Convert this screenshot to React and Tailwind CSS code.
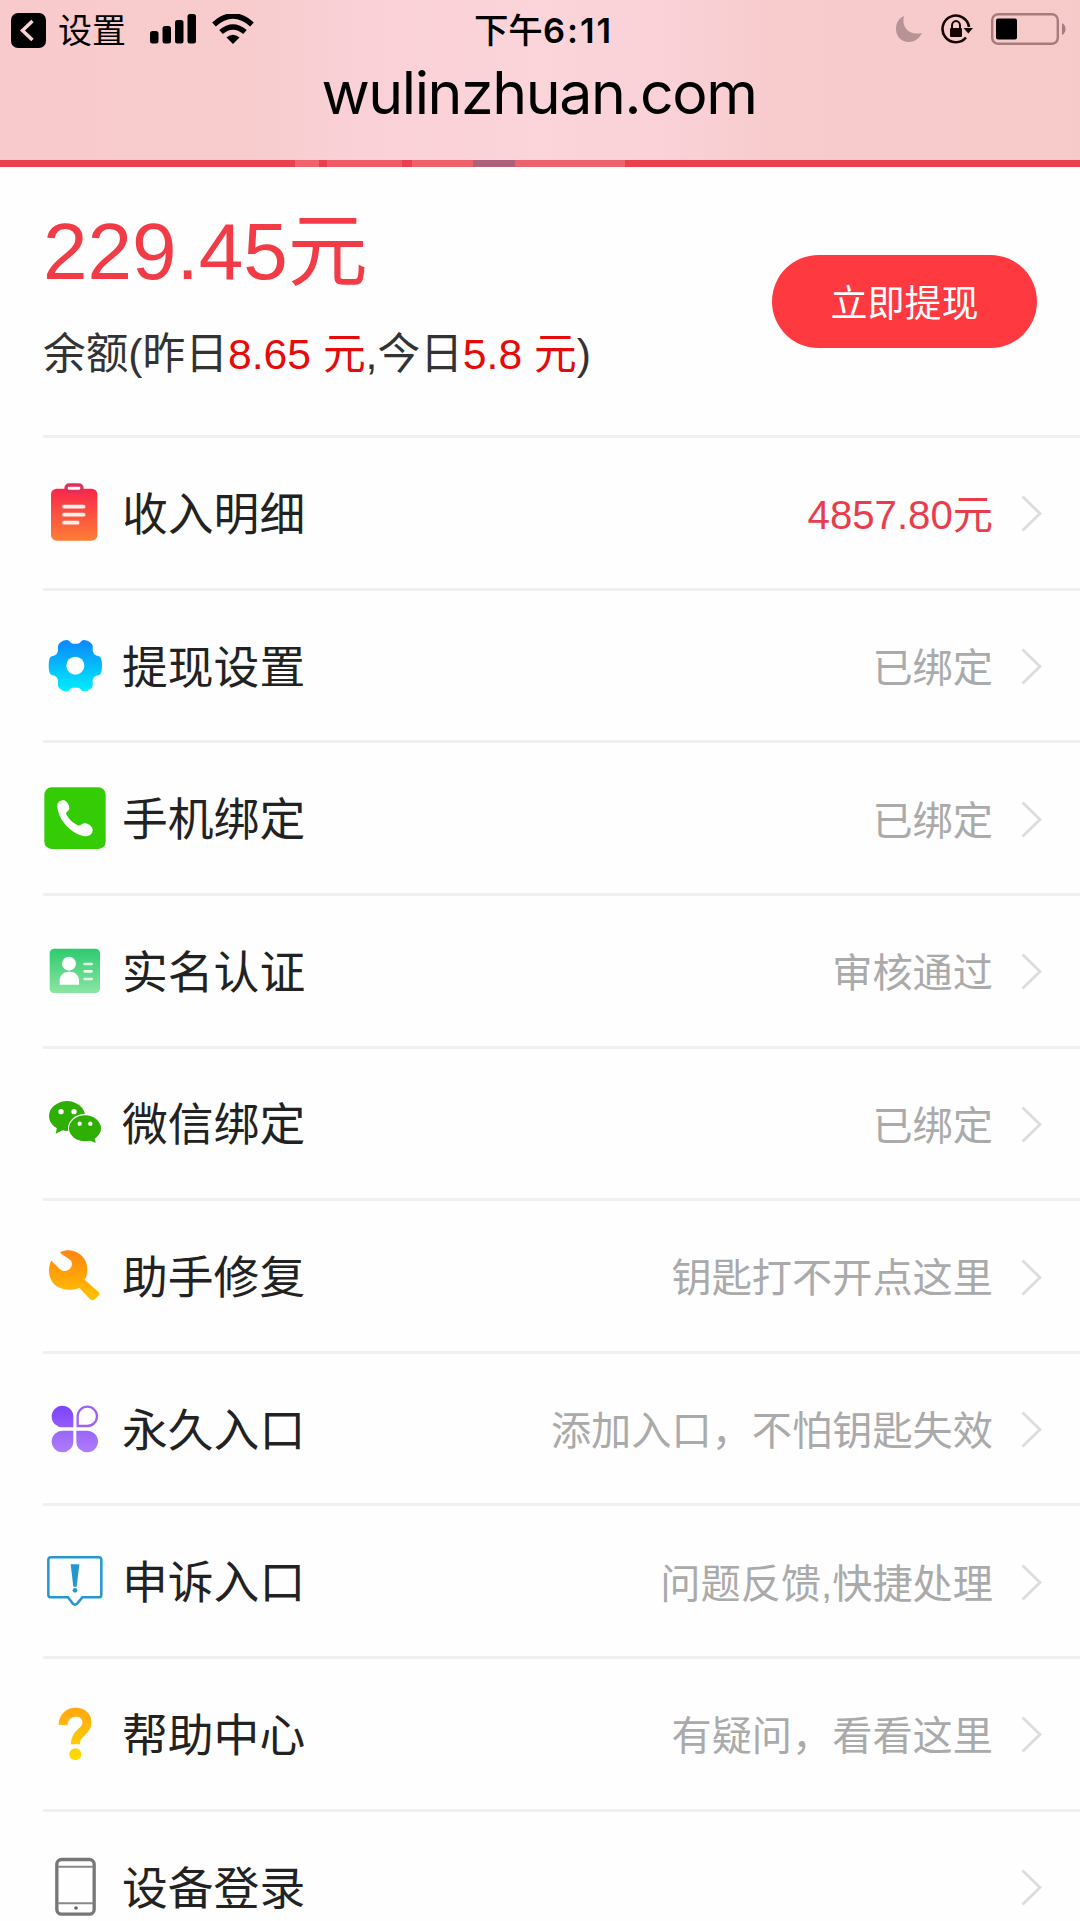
import clsx from "clsx";

const Gradient = ({ id, from, to }) => (
  <linearGradient id={id} x1="0" y1="0" x2="0" y2="1">
    <stop offset="0" stopColor={from} />
    <stop offset="1" stopColor={to} />
  </linearGradient>
);

const RowIcon = ({ viewBox, children }) => (
  <svg viewBox={viewBox} className="w-[62px] h-[62px] shrink-0" fill="none">
    {children}
  </svg>
);

const IncomeIcon = () => (
  <RowIcon viewBox="42 64 186 186">
    <Gradient id="income" from="#f9254c" to="#fe7e35" />
    <rect x="63" y="84" width="139" height="156" rx="17" fill="url(#income)" />
    <rect x="108" y="73" width="48" height="19" rx="9" fill="#fff" stroke="#e02f58" strokeWidth="10" />
    <path d="M102 138H161M102 162H161M102 186H143" stroke="#fff2ea" strokeWidth="11" strokeLinecap="round" />
  </RowIcon>
);

const SettingsIcon = () => (
  <RowIcon viewBox="12 12 186 186">
    <Gradient id="gear" from="#0a86ff" to="#00effb" />
    <path
      d="M60 38Q68 30 80 30Q87 30 91 37Q94 41 99 41H113Q118 41 121 37Q125 30 132 30Q144 30 152 38Q160 44 158 56Q156 64 162 72Q167 78 177 79Q186 82 186 107Q186 132 177 135Q167 136 162 142Q156 150 158 158Q160 170 152 176Q144 184 132 184Q125 184 121 177Q118 173 113 173H99Q94 173 91 177Q87 184 80 184Q68 184 60 176Q52 170 54 158Q56 150 50 142Q45 136 35 135Q26 132 26 107Q26 82 35 79Q45 78 50 72Q56 64 54 56Q52 44 60 38Z"
      fill="url(#gear)"
    />
    <circle cx="106" cy="107" r="27" fill="#fff" />
  </RowIcon>
);

const PhoneIcon = () => (
  <RowIcon viewBox="42 80 186 186">
    <rect x="43" y="81" width="184" height="185" rx="22" fill="#33cc05" />
    <path
      d="M82 138C81 126 90 120 101 120C111 122 116 132 118 142C119 150 110 153 108 159C114 175 128 188 146 196C154 194 158 188 166 189C178 191 188 200 188 209C188 219 180 228 165 228C125 222 84 180 82 138Z"
      fill="#fff"
    />
  </RowIcon>
);

const IdentityIcon = () => (
  <RowIcon viewBox="42 538 186 186">
    <Gradient id="identity" from="#2dcb70" to="#8be5a2" />
    <rect x="59" y="564" width="151" height="133" rx="13" fill="url(#identity)" />
    <circle cx="117" cy="609" r="21" fill="#fff" />
    <path d="M89 672V660C89 643 101 633 118 633S147 643 147 660V672Z" fill="#fff" />
    <path d="M164 610H185M164 632H185M164 655H185" stroke="#e4ffec" strokeWidth="8" strokeLinecap="round" />
  </RowIcon>
);

const WechatIcon = () => (
  <RowIcon viewBox="42 66 186 186">
    <ellipse cx="111" cy="138" rx="54" ry="45" fill="#2fae05" />
    <path d="M82 168L77 191L106 176Z" fill="#2fae05" />
    <circle cx="93" cy="125" r="8" fill="#fff" />
    <circle cx="132" cy="125" r="8" fill="#fff" />
    <ellipse cx="165" cy="175" rx="51" ry="43" fill="#fff" />
    <ellipse cx="165" cy="175" rx="48" ry="39" fill="#2fae05" />
    <path d="M172 208L197 219L192 199Z" fill="#2fae05" />
    <circle cx="149" cy="161" r="6.5" fill="#fff" />
    <circle cx="181" cy="161" r="6.5" fill="#fff" />
  </RowIcon>
);

const RepairIcon = () => (
  <RowIcon viewBox="42 524 186 186">
    <Gradient id="repair" from="#ff8410" to="#ffc400" />
    <path
      d="M90 547C99 541 108 540 116 540C148 541 172 566 172 597C172 609 170 619 164 628L205 664Q211 670 205 677L194 687Q187 693 180 687L148 652C138 657 127 658 114 658C80 657 57 634 57 602C57 591 59 580 64 571L90 597C97 604 110 604 118 597C127 589 128 578 122 570Z"
      fill="url(#repair)"
    />
  </RowIcon>
);

const CloverIcon = () => (
  <RowIcon viewBox="42 52 186 186">
    <Gradient id="petalTop" from="#7d43fb" to="#935bfb" />
    <Gradient id="petalBottom" from="#9865fb" to="#b07cfb" />
    <path d="M130 140H98A32.500 32.500 0 1 1 130 107Z" fill="url(#petalTop)" />
    <path d="M143 136V107A29 29 0 1 1 172 136Z" stroke="#9a63f4" strokeWidth="7" />
    <path d="M130 150H98A32.500 32.500 0 1 0 130 183Z" fill="url(#petalBottom)" />
    <path d="M139 150H171A32.500 32.500 0 1 1 139 183Z" fill="url(#petalBottom)" />
  </RowIcon>
);

const AppealIcon = () => (
  <RowIcon viewBox="42 510 186 186">
    <path
      d="M63 532H206Q214 532 214 540V644Q214 652 206 652H157L142 670Q135 678 128 670L114 652H63Q55 652 55 644V540Q55 532 63 532Z"
      stroke="#2497cd"
      strokeWidth="7.500"
    />
    <path d="M122 553H148L140 620H130Z" fill="#2497cd" />
    <circle cx="135" cy="631" r="7" fill="#2497cd" />
  </RowIcon>
);

const HelpIcon = () => (
  <RowIcon viewBox="42 68 186 186">
    <linearGradient id="help" gradientUnits="userSpaceOnUse" x1="0" y1="83" x2="0" y2="240">
      <stop offset="0" stopColor="#ffa710" />
      <stop offset="1" stopColor="#ffdc00" />
    </linearGradient>
    <path d="M99 134C101 108 116 96 137 96C158 96 171 108 171 127C171 155 136 155 136 192" stroke="url(#help)" strokeWidth="27" />
    <circle cx="136" cy="222" r="18" fill="url(#help)" />
  </RowIcon>
);

const DeviceIcon = () => (
  <RowIcon viewBox="42 526 186 186">
    <rect x="80.500" y="536.500" width="112" height="164" rx="14" stroke="#777" strokeWidth="10" />
    <path d="M84 558H190M84 668H190" stroke="#8a8a8a" strokeWidth="6" />
    <circle cx="138" cy="682" r="5.500" fill="#666" />
  </RowIcon>
);

const MENU = [
  { label: "收入明细", value: "4857.80元", highlight: true, icon: <IncomeIcon /> },
  { label: "提现设置", value: "已绑定", icon: <SettingsIcon /> },
  { label: "手机绑定", value: "已绑定", icon: <PhoneIcon /> },
  { label: "实名认证", value: "审核通过", icon: <IdentityIcon /> },
  { label: "微信绑定", value: "已绑定", icon: <WechatIcon /> },
  { label: "助手修复", value: "钥匙打不开点这里", icon: <RepairIcon /> },
  { label: "永久入口", value: "添加入口，不怕钥匙失效", icon: <CloverIcon /> },
  { label: "申诉入口", value: "问题反馈,快捷处理", icon: <AppealIcon /> },
  { label: "帮助中心", value: "有疑问，看看这里", icon: <HelpIcon /> },
  { label: "设备登录", value: "", icon: <DeviceIcon /> },
];

const StatusBar = () => (
  <div className="grid grid-cols-[1fr_auto_1fr] items-center h-[58px] pl-[11px] pr-[14px] text-black">
    {/* Back to settings, signal, wifi */}
    <div className="flex items-center">
      <svg viewBox="0 0 35 35" className="w-[35px] h-[35px] mt-[3px]" fill="none">
        <rect width="35" height="35" rx="7" fill="#000" />
        <path d="M21.500 8L11.500 17.500L21.500 27" stroke="#f8d5d7" strokeWidth="3.500" />
      </svg>
      <span className="ml-[12px] w-[67px] pt-[4px] text-[34px] leading-none whitespace-nowrap">设置</span>
      <svg viewBox="0 0 46 30" className="w-[46px] h-[30px] ml-[25px]" fill="#000">
        <rect x="0" y="17" width="8.500" height="12.500" rx="2.500" />
        <rect x="12.500" y="12" width="8.500" height="17.500" rx="2.500" />
        <rect x="25" y="6" width="8.500" height="23.500" rx="2.500" />
        <rect x="37.500" y="0" width="8.500" height="29.500" rx="2.500" />
      </svg>
      <svg viewBox="0 0 42 30" className="w-[42px] h-[30px] ml-[16px]" fill="none">
        <path d="M2 10.500Q21 -6.500 40 10.500" stroke="#000" strokeWidth="5.500" />
        <path d="M9 18Q21 8 33 18" stroke="#000" strokeWidth="5.500" />
        <path d="M14.500 23.500Q21 18 27.500 23.500L21 30Z" fill="#000" />
      </svg>
    </div>

    <div className="flex items-center pl-[10px] pt-[4px] text-[34.500px] leading-none">
      <span className="font-medium">下午</span>
      <span className="font-[Inter] text-[34.500px] font-semibold tracking-[2px]">6:11</span>
    </div>

    {/* Do not disturb, rotation lock, battery */}
    <div className="flex items-center justify-end">
      <svg viewBox="0 0 26 26" className="w-[26px] h-[26px]">
        <path d="M8 0C5 11 13 20 26 17C23 23 18 26 13 26C5 26 0 20 0 13C0 7 3 2 8 0Z" fill="#b79395" />
      </svg>
      <svg viewBox="0 0 32 30" className="w-[32px] h-[30px] ml-[19px]" fill="none">
        <path d="M28 13A13.300 13.300 0 1 0 25 23.500" stroke="#140606" strokeWidth="2.600" />
        <path d="M22.500 14H32L27.300 19.500Z" fill="#140606" />
        <rect x="9" y="14" width="12" height="9" rx="1" fill="#140606" />
        <path d="M11 14V11.500A4 4.500 0 0 1 19 11.500V14" stroke="#140606" strokeWidth="2" />
      </svg>
      <svg viewBox="0 0 75 32" className="w-[75px] h-[32px] ml-[18px]" fill="none">
        <rect x="1.200" y="1.200" width="65.600" height="29.600" rx="6" stroke="#a77b7e" strokeWidth="2.400" />
        <rect x="5" y="5.500" width="21" height="21" rx="2" fill="#000" />
        <path d="M71 10Q74.500 12 74.500 16T71 22Z" fill="#a77b7e" />
      </svg>
    </div>
  </div>
);

const Header = () => (
  <header>
    <div className="h-[160px] bg-[linear-gradient(90deg,#f8cacb_0%,#f8cccd_22%,#f9d0d5_32%,#fbd5da_50%,#f9d1d6_62%,#f8cbcc_74%,#f7caca_100%)]">
      <StatusBar />
      <h1 className="pr-[2px] text-center font-[Inter] text-[59px] leading-[69px] tracking-[-1.400px] text-black">wulinzhuan.com</h1>
    </div>
    {/* Edge of the banner scrolled under the bar */}
    <div className="flex h-[7px] bg-[#e8414d]">
      <div className="w-[295px]" />
      <div className="w-[24px] bg-[#f0626c]" />
      <div className="w-[8px]" />
      <div className="w-[75px] bg-[#ee5a65]" />
      <div className="w-[10px]" />
      <div className="w-[61px] bg-[#ee606a]" />
      <div className="w-[42px] bg-[#ae627a]" />
      <div className="w-[110px] bg-[#ed636d]" />
    </div>
  </header>
);

const Balance = () => (
  <section className="flex justify-between h-[268px] pl-[43px] pr-[43px]">
    <div className="pt-[37px]">
      <p className="h-[96px] text-[80px] leading-[96px] text-[#f13b46]">229.45元</p>
      <p className="mt-[24px] text-[42.700px] leading-[60px] text-[#333] whitespace-nowrap">
        余额(昨日<span className="text-[#e60a0a]">8.65 元</span>,今日<span className="text-[#e60a0a]">5.8 元</span>)
      </p>
    </div>
    <button className="mt-[88px] w-[265px] h-[93px] pt-[5px] rounded-full bg-[#ff3940] text-white text-[37px] leading-none">
      立即提现
    </button>
  </section>
);

const MenuRow = ({ label, value, highlight, icon }) => (
  <li className="flex items-center h-[152.650px] ml-[43px] pl-px pr-[38px] border-t-[3px] border-[#f0f0f0]">
    {icon}
    <span className="ml-[16px] pt-[6px] text-[45.800px] leading-none text-[#222]">{label}</span>
    <span className={clsx("ml-auto pt-[7px] text-[40.200px] leading-none", highlight ? "text-[#e93d4e]" : "text-[#aaa]")}>
      {value}
    </span>
    <svg viewBox="0 0 21 37" className="w-[21px] h-[37px] ml-[28px] mt-[2px]" fill="none">
      <path d="M1.500 1.500L19 18.500L1.500 35.500" stroke="#dcdcdc" strokeWidth="2.800" />
    </svg>
  </li>
);

export default function App() {
  return (
    <main className="w-[1080px] h-[1921px] overflow-hidden bg-[#fefefe] font-['Liberation_Sans','Noto_Sans_CJK_SC',sans-serif]">
      <Header />
      <Balance />
      <ul>
        {MENU.map((item) => (
          <MenuRow key={item.label} {...item} />
        ))}
      </ul>
    </main>
  );
}
